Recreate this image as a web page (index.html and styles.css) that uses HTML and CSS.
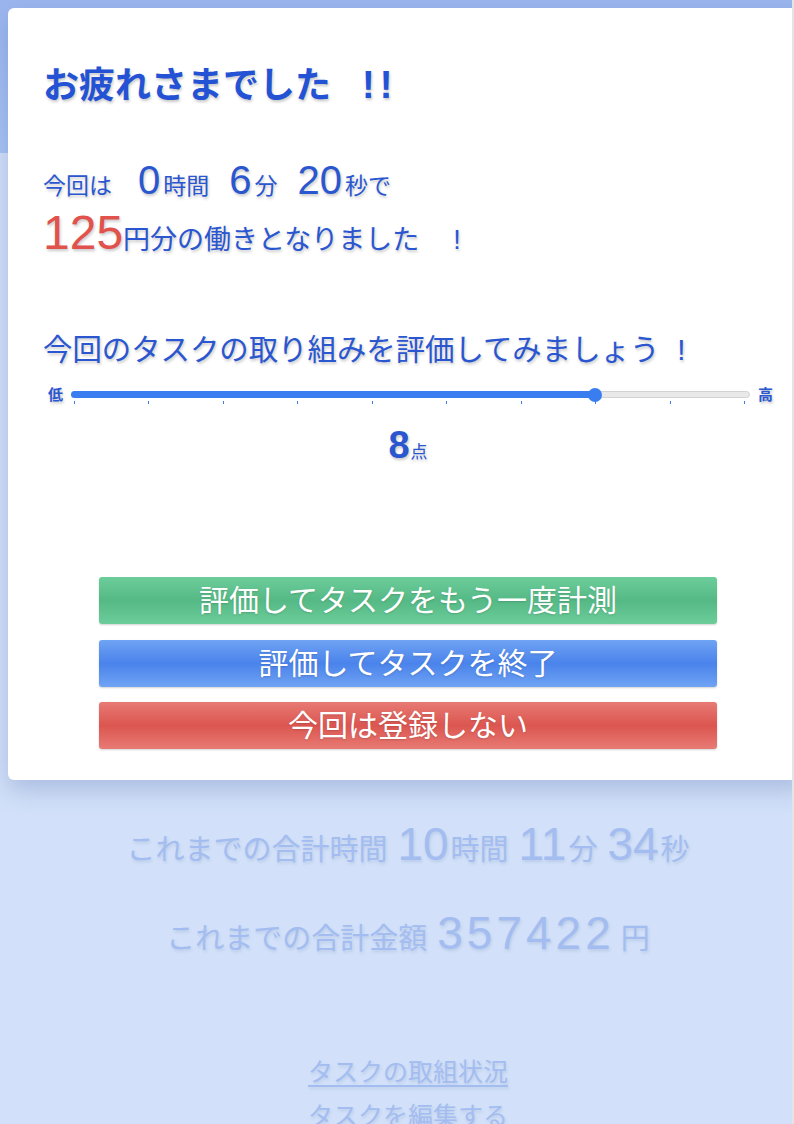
FILE: index.html
```html
<!DOCTYPE html>
<html lang="ja">
<head>
<meta charset="utf-8">
<title>お疲れさまでした</title>
<link rel="stylesheet" href="styles.css">
</head>
<body>
<div class="page">
  <header class="hero"></header>
  <main class="summary">
    <p class="total">これまでの合計時間<span class="big">10</span>時間<span class="big">11</span>分<span class="big">34</span>秒</p>
    <p class="total">これまでの合計金額<span class="big money">357422</span>円</p>
    <nav class="links">
      <a href="#" class="link">タスクの取組状況</a>
      <a href="#" class="link">タスクを編集する</a>
    </nav>
  </main>
</div>

<section class="modal">
  <h1 class="title">お疲れさまでした<span class="bang">!!</span></h1>
  <p class="result">今回は<span class="n first">0</span>時間<span class="n">6</span>分<span class="n">20</span>秒で</p>
  <p class="result2"><span class="yen">125</span>円分の働きとなりました<span class="ex">!</span></p>
  <p class="ask">今回のタスクの取り組みを評価してみましょう<span class="ex-ask">!</span></p>
  <div class="slider">
    <span class="end">低</span>
    <div class="rail">
      <div class="track">
        <div class="fill" style="width:77.3%"></div>
        <span class="thumb" style="left:77.3%"></span>
      </div>
      <div class="ticks"><i></i><i></i><i></i><i></i><i></i><i></i><i></i><i></i><i></i><i></i></div>
    </div>
    <span class="end">高</span>
  </div>
  <p class="score"><span class="pt">8</span><span class="unit">点</span></p>
  <div class="actions">
    <button class="btn btn-green">評価してタスクをもう一度計測</button>
    <button class="btn btn-blue">評価してタスクを終了</button>
    <button class="btn btn-red">今回は登録しない</button>
  </div>
</section>

<div class="scrollbar"></div>
</body>
</html>
```

FILE: styles.css
```css
html, body {
  margin: 0;
  padding: 0;
  overflow: hidden;
  height: 1124px;
  background: #d2e1f9;
  font-family: "Liberation Sans", "Noto Sans CJK JP", sans-serif;
}

.page {
  width: 816px;
  min-height: 1124px;
  background: #d2e1f9;
}

.hero {
  height: 153px;
  background: linear-gradient(to bottom, #9bb6ee 0%, #a9c5f4 100%);
}

.summary {
  padding-top: 669px;
  display: flex;
  flex-direction: column;
  align-items: center;
  color: #a4bdf0;
}

.total {
  margin: 0 0 33px;
  height: 56px;
  line-height: 56px;
  font-size: 29px;
  text-shadow: 1px 2px 3px rgba(60, 90, 150, 0.15);
  white-space: nowrap;
}

.total .big {
  font-size: 46px;
  line-height: 0;
  margin: 0 2px 0 10px;
}

.total .money {
  letter-spacing: 4px;
  margin-right: 6px;
}

.links {
  margin-top: 50px;
  display: flex;
  flex-direction: column;
  align-items: center;
}

.link {
  font-size: 25px;
  line-height: 44px;
  color: #a4bdf0;
  text-decoration: underline;
  text-underline-offset: 4px;
  text-shadow: 1px 2px 3px rgba(60, 90, 150, 0.15);
}

/* modal overlay */
.modal {
  position: absolute;
  top: 8px;
  left: 8px;
  width: 800px;
  box-sizing: border-box;
  padding: 56px 35px 31px;
  background: #fff;
  border-radius: 6px;
  box-shadow: 0 10px 24px rgba(50, 80, 150, 0.25);
  color: #2a56d0;
  text-shadow: 1px 2px 3px rgba(0, 0, 0, 0.22);
}

.title {
  margin: 0;
  height: 43px;
  font-size: 36px;
  line-height: 43px;
  font-weight: bold;
  color: #2452d4;
  white-space: nowrap;
}

.bang {
  font-size: 38px;
  line-height: 0;
  letter-spacing: 5px;
  margin-left: 31px;
}

.result {
  margin: 57px 0 0;
  height: 44px;
  font-size: 23px;
  line-height: 44px;
  white-space: nowrap;
}

.n {
  font-size: 40px;
  line-height: 0;
  margin: 0 3px 0 20px;
}

.n.first {
  margin-left: 26px;
}

.result2 {
  margin: 5px 0 0;
  height: 54px;
  font-size: 27px;
  line-height: 54px;
  white-space: nowrap;
}

.yen {
  font-size: 48px;
  line-height: 0;
  color: #e0524b;
}

.ex {
  margin-left: 34px;
}

.ask {
  margin: 63px 0 0;
  height: 40px;
  font-size: 29.4px;
  line-height: 40px;
  white-space: nowrap;
}

.ex-ask {
  margin-left: 18px;
}

.slider {
  margin-top: 15px;
  padding-left: 5px;
  display: flex;
  align-items: flex-start;
  gap: 8px;
  height: 20px;
}

.end {
  font-size: 15px;
  font-weight: bold;
  line-height: 20px;
}

.rail {
  flex: 1;
  padding-top: 6px;
}

.track {
  position: relative;
  height: 7px;
  box-sizing: border-box;
  border: 1px solid #d2d2d2;
  border-radius: 4px;
  background: #e9e9e9;
}

.fill {
  height: 7px;
  margin: -1px 0 0 -1px;
  border-radius: 4px;
  background: #3a7df1;
}

.thumb {
  position: absolute;
  top: 50%;
  width: 14px;
  height: 14px;
  margin: -7px 0 0 -7px;
  border-radius: 50%;
  background: #3a7df1;
}

.ticks {
  display: flex;
  justify-content: space-between;
  padding: 3px 5px 0 3px;
}

.ticks i {
  display: block;
  width: 1px;
  height: 3px;
  background: #3a7df1;
}

.score {
  margin: 17px 0 0;
  height: 46px;
  font-size: 38px;
  text-align: center;
  line-height: 46px;
  white-space: nowrap;
}

.pt {
  font-weight: bold;
}

.unit {
  font-size: 17px;
  line-height: 0;
  margin-left: 1px;
}

.actions {
  margin: 109px auto 0;
  width: 618px;
  display: flex;
  flex-direction: column;
  gap: 15.5px;
}

.btn {
  height: 47px;
  border: 0;
  border-radius: 3px;
  color: #fff;
  font-family: inherit;
  font-size: 30px;
  line-height: 47px;
  padding: 0;
  white-space: nowrap;
  text-shadow: 0 1px 2px rgba(0, 0, 0, 0.15);
  box-shadow: 0 1px 2px rgba(0, 0, 0, 0.18);
}

.btn-green {
  background: linear-gradient(to bottom, #6ccd9a 0%, #55b985 50%, #6ccd9a 100%);
}

.btn-blue {
  background: linear-gradient(to bottom, #6fa3f3 0%, #4a83eb 50%, #6fa3f3 100%);
}

.btn-red {
  background: linear-gradient(to bottom, #e87a74 0%, #dc5650 50%, #e87a74 100%);
}

.scrollbar {
  position: fixed;
  top: 0;
  right: 0;
  width: 2px;
  height: 100%;
  background: #e4e4e4;
}
```
